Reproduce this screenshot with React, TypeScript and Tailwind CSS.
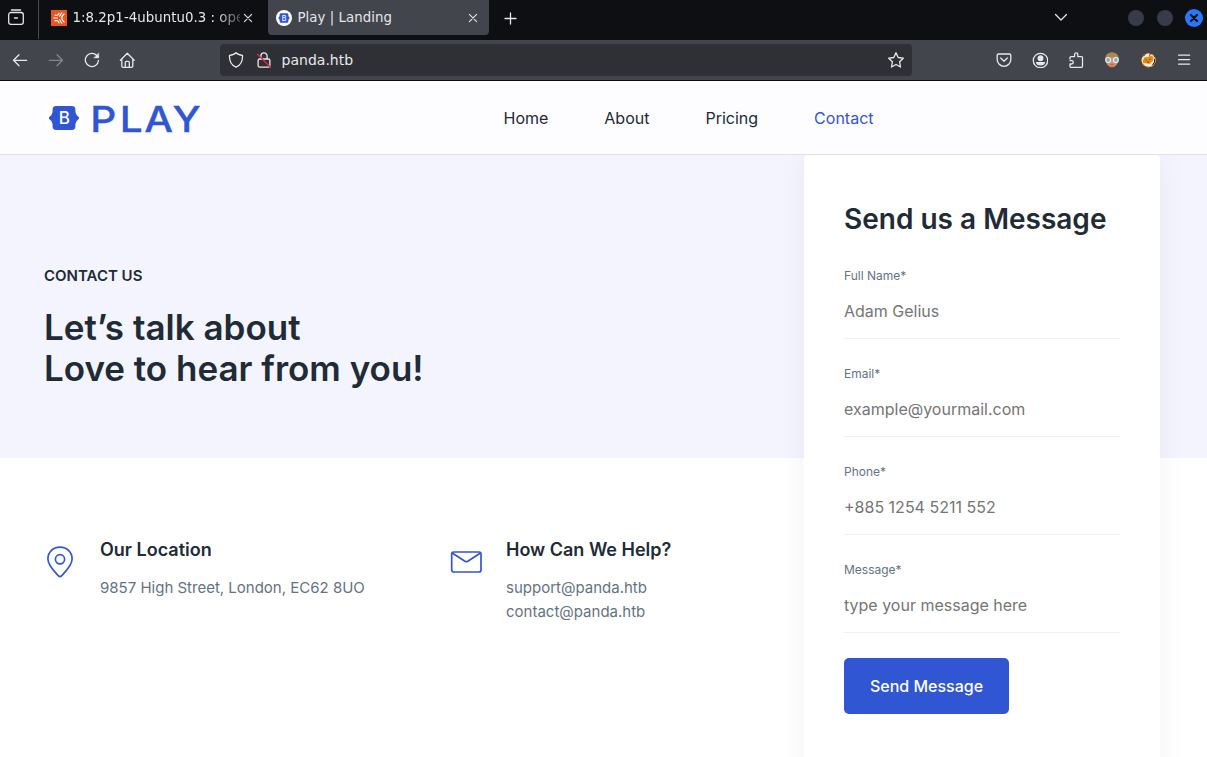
import React from "react";

type IconProps = { className?: string; children: React.ReactNode; vb?: string };

function Icon({ className = "w-4 h-4", children, vb = "0 0 16 16" }: IconProps) {
  return (
    <svg viewBox={vb} className={`shrink-0 ${className}`} fill="none" stroke="currentColor" strokeWidth="1.3" strokeLinecap="round" strokeLinejoin="round">
      {children}
    </svg>
  );
}

const BADGE =
  "M7 0H23Q26 0 26.400 3V6Q26.800 9 30 11.200V12.800Q26.800 15 26.400 18V21Q26 24 23 24H7Q4 24 3.600 21V18Q3.200 15 0 12.800V11.200Q3.200 9 3.600 6V3Q4 0 7 0Z";

function TabBar() {
  return (
    <div className="flex h-10 shrink-0 items-start bg-[#0e0f13] text-[#e6e6ea]">
      <div className="flex h-[39px] w-[39px] shrink-0 items-start border-r border-[#4a4b52] pl-2 pt-[9px]">
        <Icon>
          <path d="M3.400 1h9.200M2.900 3.500h10.200a2.200 2.200 0 0 1 2.200 2.200v7.400a2.200 2.200 0 0 1-2.200 2.200H2.900a2.200 2.200 0 0 1-2.200-2.200V5.700a2.200 2.200 0 0 1 2.200-2.200ZM6.500 9h3" />
        </Icon>
      </div>
      <div className="flex h-[35px] w-[229px] items-center pl-3">
        <svg viewBox="0 0 16 16" className="h-4 w-4 shrink-0">
          <rect width="16" height="16" fill="#e95420" />
          <g fill="none" stroke="#fff" strokeWidth="1.200" strokeLinecap="round">
            <path d="M2.700 8H6.300M8.600 6.300L10.800 2.800M8.600 9.700L10.800 13.200M4 5.200Q7.500 6 8 3M4 10.800Q7.500 10 8 13M13 4Q8.500 8 13 12" />
          </g>
        </svg>
        <div className="ml-[5.500px] w-[167.500px] overflow-hidden whitespace-nowrap font-['DejaVu_Sans',sans-serif] text-[13.330px] tracking-[0.04px] [mask-image:linear-gradient(to_right,black_142px,transparent_176px)]">
          1:8.2p1-4ubuntu0.3 : ope
        </div>
        <Icon className="h-4 w-4"><path d="M4.400 4.400l7.200 7.200M11.600 4.400l-7.200 7.200" strokeWidth="1.100" /></Icon>
      </div>
      <div className="flex h-[35px] w-[221px] items-center rounded-b-[4px] bg-[#42454c] pl-2">
        <svg viewBox="0 0 16 16" className="h-4 w-4 shrink-0">
          <circle cx="8" cy="8" r="8" fill="#fff" />
          <path d={BADGE} transform="translate(2.300 3.300) scale(.38 .39)" fill="#3056d3" />
          <text x="8" y="10.500" textAnchor="middle" className="font-['Inter',sans-serif] text-[7px] font-medium" fill="#fff">B</text>
        </svg>
        <div className="ml-[5.500px] w-[167.500px] whitespace-nowrap font-['DejaVu_Sans',sans-serif] text-[13.330px] tracking-[0.04px]">Play | Landing</div>
        <Icon><path d="M4.400 4.400l7.200 7.200M11.600 4.400l-7.200 7.200" strokeWidth="1.100" /></Icon>
      </div>
      <div className="flex h-[35px] flex-1 items-center">
        <Icon className="ml-[13px] h-4 w-4"><path d="M8.500 3v11M3 8.500h11" /></Icon>
        <div className="flex-1" />
        <Icon className="h-4 w-4"><path d="M2.500 4.500l5.500 5.500L13.500 4.500" /></Icon>
        <div className="ml-[59px] h-4 w-4 rounded-full bg-[#383c4a]" />
        <div className="ml-[13px] h-4 w-4 rounded-full bg-[#383c4a]" />
        <div className="ml-[12px] mr-1 flex h-[18px] w-[18px] items-center justify-center rounded-full bg-[#2777ff]">
          <Icon className="h-[18px] w-[18px] text-[#0e0f13]" vb="0 0 18 18"><path d="M6 6l6 6M12 6l-6 6" strokeWidth="2.200" /></Icon>
        </div>
      </div>
    </div>
  );
}

function ToolBar() {
  return (
    <div className="flex h-[41px] shrink-0 items-center border-b border-[#0c0c0d] bg-[#42454c] text-[#e8e8ec]">
      <Icon className="ml-3 h-4 w-4"><path d="M14.700 8.300H1.500M7 2.800L1.500 8.300L7 13.800" /></Icon>
      <Icon className="ml-5 h-4 w-4 text-[#86878c]"><path d="M1.300 8.300h13.200M9 2.800L14.500 8.300L9 13.800" /></Icon>
      <Icon className="ml-5 h-4 w-4"><path d="M14.500 8.500A6.600 6.600 0 1 1 12.800 3.500L14.300 5" /><path d="M14.700 1.200V5.900H10Z" fill="currentColor" strokeWidth=".5" /></Icon>
      <Icon className="ml-[19px] h-4 w-4"><path d="M1.400 8.300L8.300 1.300L15.200 8.300M2.800 7.300v6.700a1.300 1.300 0 0 0 1.300 1.300h8.400a1.300 1.300 0 0 0 1.300-1.300V7.300M6.300 15V10.300a1 1 0 0 1 1-1h2a1 1 0 0 1 1 1V15" /></Icon>
      <div className="ml-[85px] flex h-8 w-[692px] items-center rounded-[4px] bg-[#2f3036] pl-2 pr-2">
        <Icon><path d="M8 .8C9.500 2.500 12 3.100 14.500 3.300C14.800 8.500 12.600 13.200 8 15.200C3.400 13.200 1.200 8.500 1.500 3.300C4 3.100 6.500 2.500 8 .8Z" /></Icon>
        <Icon className="ml-3 h-4 w-4">
          <path d="M4.900 6.500V4a3.100 3.100 0 0 1 6.200 0v2.500M3.700 7h8.600a1.600 1.600 0 0 1 1.600 1.600v5a1.600 1.600 0 0 1-1.600 1.600H3.700a1.600 1.600 0 0 1-1.600-1.600v-5A1.600 1.600 0 0 1 3.700 7Z" />
          <path d="M1.500 2.200l13 13" stroke="#e22850" />
        </Icon>
        <span className="ml-[9.500px] flex-1 font-['DejaVu_Sans',sans-serif] text-[14px] leading-5 tracking-[0.02px]">panda.htb</span>
        <Icon><path d="M8 .8l2.200 4.700 5.100.7-3.700 3.600.9 5.200L8 12.500 3.500 15l.9-5.200L.7 6.200l5.100-.7Z" /></Icon>
      </div>
      <Icon className="ml-[84px] h-4 w-4"><path d="M2.400 2h11.200a1.200 1.200 0 0 1 1.200 1.200V7.500A6.800 6.800 0 0 1 1.200 7.500V3.200A1.200 1.200 0 0 1 2.400 2ZM4.700 6L8 9.200L11.300 6" /></Icon>
      <Icon className="ml-5 h-4 w-4"><circle cx="8.500" cy="8.500" r="7.200" /><circle cx="8.500" cy="6.200" r="2.300" fill="currentColor" /><path d="M4.600 10.600h7.800q-.6 2.200-3.900 2.200t-3.900-2.200Z" fill="currentColor" /></Icon>
      <Icon className="ml-5 h-4 w-4"><path d="M2 7V5.600a1 1 0 0 1 1-1H6.600V2.500a1.600 1.600 0 0 1 3.200 0V4.600h3.700a1 1 0 0 1 1 1v8.700a1 1 0 0 1-1 1H3a1 1 0 0 1-1-1V12H3.600a1.700 1.700 0 0 0 0-3.400H2" /></Icon>
      <svg viewBox="0 0 16 16" className="ml-5 h-4 w-4 shrink-0">
        <path d="M8 .5C3.500 .5 1 4 1.500 7.500Q2.500 15 8 15.300Q13.500 15 14.500 7.500C15 4 12.500 .5 8 .5Z" fill="#d98762" />
        <path d="M1.300 6.500Q1.500 .5 8 .5T14.700 6.500L12 5H4Z" fill="#ad8650" />
        <circle cx="4.200" cy="8" r="2.500" fill="#7db3c0" stroke="#e9f1ef" strokeWidth="1.200" />
        <circle cx="11.800" cy="8" r="2.500" fill="#7db3c0" stroke="#e9f1ef" strokeWidth="1.200" />
        <path d="M6.300 12.700q1.700 .7 3.400 0" stroke="#b8604a" fill="none" />
      </svg>
      <svg viewBox="0 0 16 16" className="ml-5 h-4 w-4 shrink-0">
        <circle cx="8.500" cy="8.200" r="6.800" fill="#f4efe6" stroke="#e8951f" strokeWidth="1.100" strokeDasharray="3 2" />
        <path d="M3 8.500L4.500 5.300L8 5L10.500 3.500L13.500 5L13 9L11 10.500L10 12L7 11.500L3 11Z" fill="#e88a14" />
        <path d="M10.500 1.500l-1 2M5 2.500L3.500 4M14.500 7v3l-2 3" stroke="#2b211c" strokeWidth="1" fill="none" />
        <path d="M5.500 8h1.200M9.200 7.300h1.300M7 10.200l2-.3" stroke="#6b3c12" strokeWidth="1" />
      </svg>
      <Icon className="ml-5 h-4 w-4"><path d="M2.600 3.200h11M2.600 7.700h11M2.600 12.200h11" /></Icon>
    </div>
  );
}

function Header() {
  return (
    <header className="flex h-[74px] shrink-0 items-center border-b border-[#e0e0e6] bg-[#fdfdff] text-[16px]">
      <svg viewBox="0 0 160 60" className="ml-11 h-[60px] w-40">
        <circle cx="20" cy="30" r="20" fill="#fff" />
        <path d={BADGE} transform="translate(5 18)" fill="#3056d3" />
        <text x="20.300" y="36" textAnchor="middle" className="font-['Inter',sans-serif] text-[17px] font-medium" fill="#fff">B</text>
        <g transform="translate(0 44.200) scale(1.13 1)">
          <text x="41 67 88.800 113.800" y="0" className="font-['Inter',sans-serif] text-[36px] font-medium" fill="#3056d3" stroke="#3056d3" strokeWidth=".3">PLAY</text>
        </g>
      </svg>
      <nav className="ml-[299.500px] flex gap-14 text-[#212b36]">
        <a>Home</a>
        <a>About</a>
        <a>Pricing</a>
        <a className="text-[#3056d3]">Contact</a>
      </nav>
    </header>
  );
}

function Field({ label, value }: { label: string; value: string }) {
  return (
    <label className="mb-[25px] block h-[73px] border-b border-[#f1f1f1] pt-px">
      <span className="block text-[12px] leading-[18px] text-[#637381]">{label}</span>
      <input placeholder={value} className="mt-[14px] block h-6 w-full bg-transparent text-[16px] leading-6 outline-none placeholder:text-[#757575]" />
    </label>
  );
}

function ContactForm() {
  return (
    <form className="h-[640px] w-[356px] shrink-0 rounded-[4px] bg-white px-10 pt-[45px] shadow-[0px_0px_30px_rgba(0,0,0,0.05)]">
      <h3 className="mb-[28px] whitespace-nowrap text-[28px] font-semibold leading-[38px] text-[#212b36]">Send us a Message</h3>
      <Field label="Full Name*" value="Adam Gelius" />
      <Field label="Email*" value="example@yourmail.com" />
      <Field label="Phone*" value="+885 1254 5211 552" />
      <Field label="Message*" value="type your message here" />
      <button type="button" className="h-14 w-[165px] rounded-[5px] bg-[#3056d3] text-[16px] font-medium text-white">Send Message</button>
    </form>
  );
}

export default function App() {
  return (
    <div className="flex h-[757px] w-[1207px] flex-col overflow-hidden bg-white font-['Inter',sans-serif]">
      <TabBar />
      <ToolBar />
      <Header />
      <main className="flex min-h-0 flex-1 overflow-hidden bg-[linear-gradient(to_bottom,#f3f4fe_303px,#ffffff_303px)]">
        <div className="w-[804px] shrink-0 pl-11 text-[#212b36]">
          <section className="h-[303px] pt-[109px]">
            <div className="text-[15px] font-semibold leading-6">CONTACT US</div>
            <h2 className="mt-[19px] text-[35px] font-semibold leading-[41px]">Let’s talk about<br />Love to hear from you!</h2>
          </section>
          <section className="flex pt-[78px]">
            <div className="flex w-[406px]">
              <svg viewBox="0 0 32 32" className="mt-[10px] h-8 w-8" fill="none" stroke="#3056d3" strokeWidth="1.700" strokeLinejoin="round">
                <path d="M16 1.200C8.800 1.200 3.900 6.500 3.900 12.700C3.900 19.500 10.500 25.500 14.300 29.600Q16 31.500 17.700 29.600C21.500 25.500 28.100 19.500 28.100 12.700C28.100 6.500 23.200 1.200 16 1.200Z" />
                <circle cx="16" cy="13.300" r="4.600" />
              </svg>
              <div className="ml-6">
                <h5 className="text-[18px] font-semibold leading-[27px]">Our Location</h5>
                <p className="mt-[13px] text-[15px] leading-6 text-[#637381]">9857 High Street, London, EC62 8UO</p>
              </div>
            </div>
            <div className="flex">
              <svg viewBox="0 0 32 32" className="mt-[10px] h-8 w-8" fill="none" stroke="#3056d3" strokeWidth="1.700" strokeLinejoin="round">
                <rect x="1.700" y="6" width="29.300" height="20" rx="2" />
                <path d="M2.200 7L15 15.300Q16.400 16.100 17.800 15.300L30.500 7" />
              </svg>
              <div className="ml-6">
                <h5 className="text-[18px] font-semibold leading-[27px]">How Can We Help?</h5>
                <p className="mt-[13px] text-[15px] leading-6 text-[#637381]">support@panda.htb<br />contact@panda.htb</p>
              </div>
            </div>
          </section>
        </div>
        <ContactForm />
      </main>
    </div>
  );
}
